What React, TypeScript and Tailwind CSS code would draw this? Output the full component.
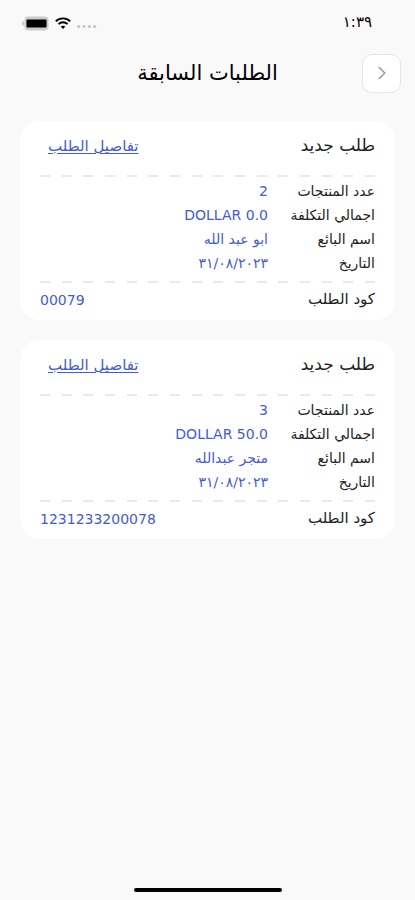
import { ChevronRight } from "lucide-react";

type Order = {
  code: string;
  products: string;
  total: string;
  seller: string;
  date: string;
};

const orders: Order[] = [
  {
    code: "00079",
    products: "2",
    total: "DOLLAR 0.0",
    seller: "ابو عبد الله",
    date: "٣١/٠٨/٢٠٢٣",
  },
  {
    code: "1231233200078",
    products: "3",
    total: "DOLLAR 50.0",
    seller: "متجر عبدالله",
    date: "٣١/٠٨/٢٠٢٣",
  },
];

const StatusBar = () => (
  <div className="flex h-11 items-center justify-between pr-[43px] pl-5">
    <span className="text-[15px]" dir="ltr">
      ١:٣٩
    </span>
    <div className="flex items-center gap-1.5 pt-0.5" dir="ltr">
      <svg width="29" height="15" viewBox="0 0 29 15" aria-hidden="true">
        <path d="M3.5 5v5C1.4 9.4 1.4 5.6 3.5 5z" fill="#b8b8b8" />
        <rect x="4.5" y="0.5" width="24" height="14" rx="4" fill="#cbcbcb" />
        <rect x="6.5" y="3.5" width="20" height="8" rx="1" fill="#000" />
      </svg>
      <svg width="16" height="12" viewBox="0 0 16 12" aria-hidden="true">
        <g fill="none" stroke="#000" strokeWidth="1.9">
          <path d="M0.8 4.3C4.8 0.4 11.2 0.4 15.2 4.3" />
          <path d="M3.5 7.1C6 4.7 10 4.7 12.5 7.1" />
        </g>
        <path d="M8 12L5.7 9.6C7 8.4 9 8.4 10.3 9.6z" fill="#000" />
      </svg>
      <svg width="20" height="12" viewBox="0 0 20 12" aria-hidden="true">
        <g fill="#c4c4c4">
          <circle cx="1.7" cy="9.5" r="1.6" />
          <circle cx="7" cy="9.5" r="1.6" />
          <circle cx="12.3" cy="9.5" r="1.6" />
          <circle cx="17.6" cy="9.5" r="1.6" />
        </g>
      </svg>
    </div>
  </div>
);

const DashedLine = () => (
  <div className="flex justify-between" aria-hidden="true">
    {Array.from({ length: 16 }, (_, i) => (
      <span key={i} className="h-0.5 w-2.5 bg-[#e9e9e9]" />
    ))}
  </div>
);

const OrderCard = ({ order }: { order: Order }) => {
  const rows = [
    { label: "عدد المنتجات", value: order.products },
    { label: "اجمالي التكلفة", value: order.total },
    { label: "اسم البائع", value: order.seller },
    { label: "التاريخ", value: order.date },
  ];

  return (
    <article className="rounded-[20px] bg-white px-5">
      <div className="flex h-[54px] items-center justify-between pb-1 pl-2">
        <h2 className="text-[17px] text-[#222]">طلب جديد</h2>
        <a href="#" className="text-[15px] text-[#435bd6] underline underline-offset-2">
          تفاصيل الطلب
        </a>
      </div>
      <DashedLine />
      <dl className="pt-0.5 pb-1.5 text-sm leading-6">
        {rows.map((row) => (
          <div key={row.label} className="flex">
            <dt className="w-[107px] shrink-0 whitespace-nowrap text-[#222]">{row.label}</dt>
            <dd className="text-[#435bd6]">
              <bdi>{row.value}</bdi>
            </dd>
          </div>
        ))}
      </dl>
      <DashedLine />
      <div className="flex h-[37px] items-center justify-between pb-1">
        <span className="text-[15px] text-[#222]">كود الطلب</span>
        <span className="text-sm text-[#435bd6]">{order.code}</span>
      </div>
    </article>
  );
};

const App = () => {
  return (
    <div
      dir="rtl"
      className="flex min-h-screen flex-col bg-[#f9f9f9] font-['DejaVu_Sans',sans-serif] text-black"
    >
      <StatusBar />
      <header className="grid h-[58px] grid-cols-[40px_1fr_40px] items-center px-3.5">
        <button
          type="button"
          aria-label="رجوع"
          className="flex size-[39px] items-center justify-center rounded-[10px] border border-[#e6e6e6] bg-white"
        >
          <ChevronRight className="size-[22px] text-[#999]" strokeWidth={1.7} />
        </button>
        <h1 className="pt-0.5 text-center text-[21px] font-medium">الطلبات السابقة</h1>
      </header>
      <main className="flex flex-col gap-5 px-5 pt-[19px]">
        {orders.map((order) => (
          <OrderCard key={order.code} order={order} />
        ))}
      </main>
      <div className="mx-auto mt-auto mb-2 h-1 w-[148px] rounded-full bg-black" />
    </div>
  );
};

export default App;
